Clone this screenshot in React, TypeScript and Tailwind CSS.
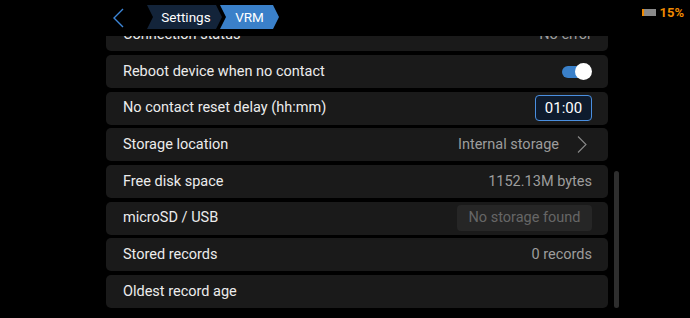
function Row({ label, children }: { label: string; children?: React.ReactNode }) {
  return (
    <div className="h-[33px] shrink-0 rounded-[5px] bg-[#1a1a1a] flex items-center justify-between pl-[17px] pr-[16px]">
      <span className="text-[14.5px] text-[#ececec]">{label}</span>
      {children}
    </div>
  );
}

function Value({ children }: { children: React.ReactNode }) {
  return <span className="text-[14.5px] text-[#9d9d9d]">{children}</span>;
}

export default function App() {
  return (
    <div className="w-[690px] h-[318px] bg-black overflow-hidden flex flex-col font-['Roboto',sans-serif]">
      <div className="h-[36px] shrink-0 bg-black relative z-10 flex items-start">
        <svg className="ml-[112px] mt-[8px]" width="12" height="20" viewBox="0 0 12 20" fill="none">
          <polyline points="11,1 2,10 11,19" stroke="#3d86d8" strokeWidth="1.4" />
        </svg>
        <div className="ml-[23px] mt-[5px] flex">
          <div className="w-[75px] h-[24px] bg-[#13243a] text-white text-[13.5px] flex items-center justify-center pl-[3px] [clip-path:polygon(0_0,calc(100%_-_6px)_0,100%_50%,calc(100%_-_6px)_100%,0_100%,6px_50%)]">
            Settings
          </div>
          <div className="-ml-[2px] w-[59px] h-[24px] bg-[#3a80c9] text-white text-[13.5px] flex items-center justify-center [clip-path:polygon(0_0,calc(100%_-_6px)_0,100%_50%,calc(100%_-_6px)_100%,0_100%,6px_50%)]">
            VRM
          </div>
        </div>
        <div className="ml-auto mr-[6px] mt-[6px] flex items-center gap-[3px]">
          <div className="w-[14px] h-[7px] bg-[#8a8a8a] flex">
            <div className="w-[2px] h-full bg-[#f08a00]" />
          </div>
          <span className="text-[13px] font-bold text-[#f08a00] leading-none">15%</span>
        </div>
      </div>
      <div className="flex-1 overflow-hidden flex">
        <div className="ml-[106px] w-[502px] -mt-[17.67px] flex flex-col gap-[3.67px]">
          <Row label="Connection status">
            <Value>No error</Value>
          </Row>
          <Row label="Reboot device when no contact">
            <div className="relative w-[30px] h-[17px] flex items-center">
              <div className="w-[27px] h-[12px] rounded-full bg-[#3a80c9]" />
              <div className="absolute right-0 top-0 w-[17px] h-[17px] rounded-full bg-white" />
            </div>
          </Row>
          <Row label="No contact reset delay (hh:mm)">
            <div className="w-[57px] h-[26px] rounded-[4px] border-[1.5px] border-[#4a8fe0] bg-[#0e1b2d] flex items-center justify-center text-[15px] text-white">
              01:00
            </div>
          </Row>
          <Row label="Storage location">
            <div className="flex items-center gap-[18px] mr-[5px]">
              <Value>Internal storage</Value>
              <svg width="10" height="17" viewBox="0 0 10 17" fill="none">
                <polyline points="1,0.5 9,8.5 1,16.5" stroke="#8a8a8a" strokeWidth="1.1" />
              </svg>
            </div>
          </Row>
          <Row label="Free disk space">
            <Value>1152.13M bytes</Value>
          </Row>
          <Row label="microSD / USB">
            <div className="w-[135px] h-[26px] rounded-[4px] bg-[#262626] flex items-center justify-center text-[14.5px] text-[#666666]">
              No storage found
            </div>
          </Row>
          <Row label="Stored records">
            <Value>0 records</Value>
          </Row>
          <Row label="Oldest record age" />
        </div>
        <div className="ml-[6px] mt-[135px] w-[5px] h-[137px] rounded-full bg-[#2e2e2e]" />
      </div>
    </div>
  );
}
